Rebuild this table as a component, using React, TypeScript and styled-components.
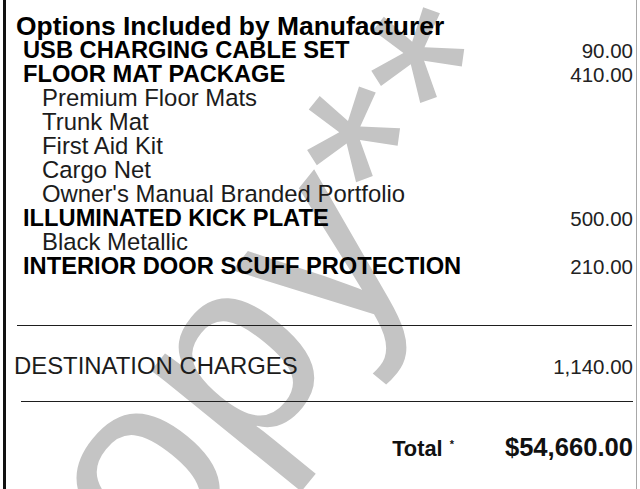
import styled, { createGlobalStyle } from 'styled-components';

type Kind = 'option' | 'detail';

type Line = {
  label: string;
  kind: Kind;
  price?: string;
};

const lines: Line[] = [
  { label: 'USB CHARGING CABLE SET', kind: 'option', price: '90.00' },
  { label: 'FLOOR MAT PACKAGE', kind: 'option', price: '410.00' },
  { label: 'Premium Floor Mats', kind: 'detail' },
  { label: 'Trunk Mat', kind: 'detail' },
  { label: 'First Aid Kit', kind: 'detail' },
  { label: 'Cargo Net', kind: 'detail' },
  { label: "Owner's Manual Branded Portfolio", kind: 'detail' },
  { label: 'ILLUMINATED KICK PLATE', kind: 'option', price: '500.00' },
  { label: 'Black Metallic', kind: 'detail' },
  { label: 'INTERIOR DOOR SCUFF PROTECTION', kind: 'option', price: '210.00' },
];

function App() {
  return (
    <>
      <GlobalStyle />
      <Page>
        <Watermark aria-hidden='true'>copy**</Watermark>
        <Sheet>
          <Title>Options Included by Manufacturer</Title>
          {lines.map((line) => (
            <Row key={line.label}>
              <Label $kind={line.kind}>{line.label}</Label>
              {line.price && <Price>{line.price}</Price>}
            </Row>
          ))}
          <Rule $top={47} $left={11} $right={1} />
          <Row $top={28}>
            <Label $kind='charge'>DESTINATION CHARGES</Label>
            <Price>1,140.00</Price>
          </Row>
          <Rule $top={23} $left={15} $right={0} />
          <TotalRow>
            <TotalLabel>
              Total<Sup>*</Sup>
            </TotalLabel>
            <Amount>$54,660.00</Amount>
          </TotalRow>
        </Sheet>
      </Page>
    </>
  );
}

export default App;

const GlobalStyle = createGlobalStyle`
  html, body {
    margin: 0;
    padding: 0;
    background: #fff;
  }
  body {
    font-family: 'Liberation Sans', Arial, sans-serif;
  }
`;

const Page = styled.div`
  position: relative;
  width: 640px;
  height: 489px;
  box-sizing: border-box;
  padding: 0 3px;
  display: flex;
  overflow: hidden;
  background: #fff;
`;

const Watermark = styled.div`
  position: absolute;
  left: -98px;
  top: 547px;
  z-index: 0;
  font-family: 'Liberation Sans', Arial, sans-serif;
  font-size: 262px;
  line-height: 1;
  color: #c4c4c4;
  white-space: nowrap;
  transform-origin: 0 0;
  transform: rotate(-51deg);
  pointer-events: none;
`;

const Sheet = styled.div`
  position: relative;
  z-index: 1;
  flex: 1;
  display: flex;
  flex-direction: column;
  padding: 14px 3px 0 0;
  border-left: 3px solid #111;
  border-right: 1px solid #a8a8a8;
`;

const Title = styled.div`
  margin-left: 10px;
  font-size: 26.4px;
  font-weight: 700;
  line-height: 24px;
  color: #000;
  white-space: nowrap;
`;

const Row = styled.div<{ $top?: number }>`
  display: flex;
  align-items: baseline;
  justify-content: space-between;
  height: 24px;
  margin-top: ${(p) => p.$top ?? 0}px;
`;

const Label = styled.span<{ $kind: Kind | 'charge' }>`
  margin-left: ${(p) =>
    p.$kind === 'option' ? 17 : p.$kind === 'detail' ? 36 : 8}px;
  font-size: ${(p) => (p.$kind === 'option' ? 23.7 : 23.9)}px;
  line-height: 24px;
  font-weight: ${(p) => (p.$kind === 'option' ? 700 : 400)};
  color: ${(p) => (p.$kind === 'option' ? '#000' : '#1c1c1c')};
  white-space: nowrap;
`;

const Price = styled.span`
  font-size: 20.5px;
  line-height: 24px;
  color: #222;
`;

const Rule = styled.div<{ $top: number; $left: number; $right: number }>`
  height: 0;
  margin: ${(p) => p.$top}px ${(p) => p.$right}px 0 ${(p) => p.$left}px;
  border-top: 1px solid #1e1e1e;
`;

const TotalRow = styled.div`
  display: flex;
  align-items: baseline;
  justify-content: flex-end;
  gap: 51px;
  height: 30px;
  margin-top: 30px;
  font-weight: 700;
  color: #111;
`;

const TotalLabel = styled.span`
  font-size: 21.8px;
  line-height: 30px;
`;

const Sup = styled.span`
  margin-left: 7px;
  font-size: 11px;
  vertical-align: 8px;
  line-height: 0;
`;

const Amount = styled.span`
  font-size: 25.6px;
  line-height: 30px;
`;
